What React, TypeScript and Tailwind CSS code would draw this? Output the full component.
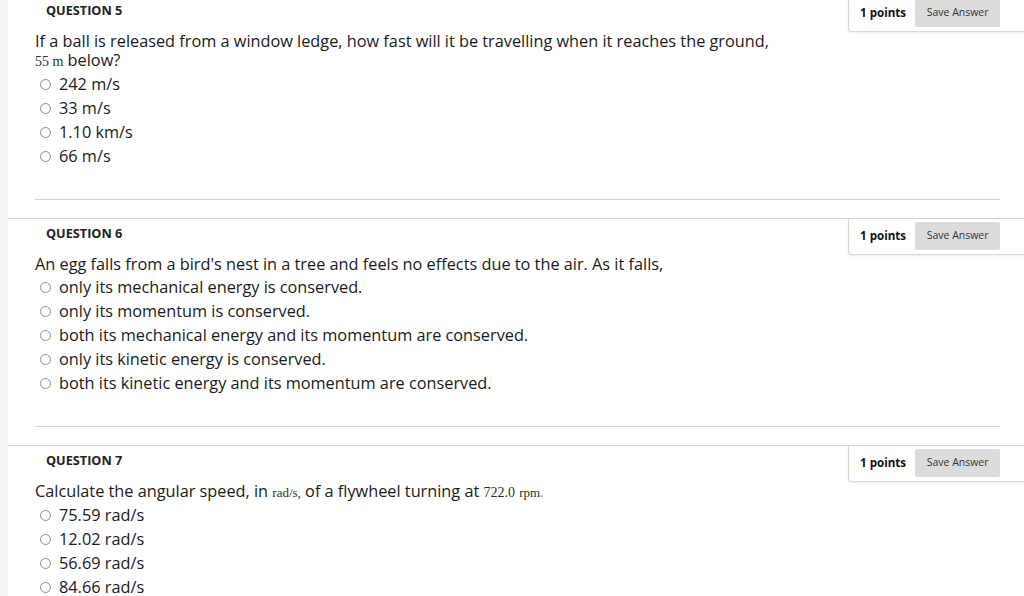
import React from 'react';

interface Question {
  num: number;
  prompt: React.ReactNode;
  options: string[];
}

const serif = "font-['Liberation_Serif','Times_New_Roman',serif] text-[#2f2f24]";

const questions: Question[] = [
  {
    num: 5,
    prompt: (
      <>
        If a ball is released from a window ledge, how fast will it be travelling when it reaches the ground,
        <br />
        <span className={`${serif} text-[14px]`}>55 m</span> below?
      </>
    ),
    options: ['242 m/s', '33 m/s', '1.10 km/s', '66 m/s'],
  },
  {
    num: 6,
    prompt: <>An egg falls from a bird's nest in a tree and feels no effects due to the air. As it falls,</>,
    options: [
      'only its mechanical energy is conserved.',
      'only its momentum is conserved.',
      'both its mechanical energy and its momentum are conserved.',
      'only its kinetic energy is conserved.',
      'both its kinetic energy and its momentum are conserved.',
    ],
  },
  {
    num: 7,
    prompt: (
      <>
        Calculate the angular speed, in <span className={`${serif} text-[13px]`}>rad/s,</span> of a flywheel
        turning at <span className={`${serif} text-[14px]`}>722.0</span>{' '}
        <span className={`${serif} text-[13px]`}>rpm</span>
        <span className="text-[12px] text-[#777]">.</span>
      </>
    ),
    options: ['75.59 rad/s', '12.02 rad/s', '56.69 rad/s', '84.66 rad/s'],
  },
];

function QuestionBlock({ q, first }: { q: Question; first: boolean }) {
  return (
    <div className={first ? '-mt-[4px]' : 'border-t border-[#d4d4d4]'}>
      {/* Header row */}
      <div className="flex items-start justify-between">
        <div className="pl-[38px] pt-[5px] text-[12.7px] leading-[18px] font-bold text-[#222]">
          QUESTION {q.num}
        </div>
        <div className="flex items-center w-[176px] border-l border-b border-[#d8d8d8] rounded-bl-[3px] shadow-[0_1px_2px_rgba(0,0,0,0.08)] pl-[11px] pt-[3px] pb-[4px]">
          <span className="text-[11.6px] font-bold text-[#111]">1 points</span>
          <button className="ml-[9px] h-[28px] w-[85px] bg-[#dcdcdc] rounded-[2px] text-[10.5px] text-[#333]">
            Save Answer
          </button>
        </div>
      </div>

      {/* Prompt */}
      <div className="pl-[27px] text-[16.3px] leading-[19px] text-[#1a1a1a]">{q.prompt}</div>

      {/* Options */}
      <div className="mt-[1px] pl-[32px]">
        {q.options.map((opt) => (
          <div key={opt} className="flex items-center h-[24px] text-[16.3px] text-[#1a1a1a]">
            <span className="w-[11px] h-[11px] rounded-full border border-[#8a8a8a] bg-white" />
            <span className="ml-[8px]">{opt}</span>
          </div>
        ))}
      </div>

      <div className="mt-[31px] mb-[18px] ml-[27px] mr-[24px] border-t border-[#d4d4d4]" />
    </div>
  );
}

export default function App() {
  return (
    <div className="flex h-[596px] overflow-hidden bg-white font-['Open_Sans',sans-serif]">
      <div className="w-[8px] shrink-0 bg-[#f4f4f4]" />
      <div className="flex-1">
        {questions.map((q, i) => (
          <QuestionBlock key={q.num} q={q} first={i === 0} />
        ))}
      </div>
    </div>
  );
}
